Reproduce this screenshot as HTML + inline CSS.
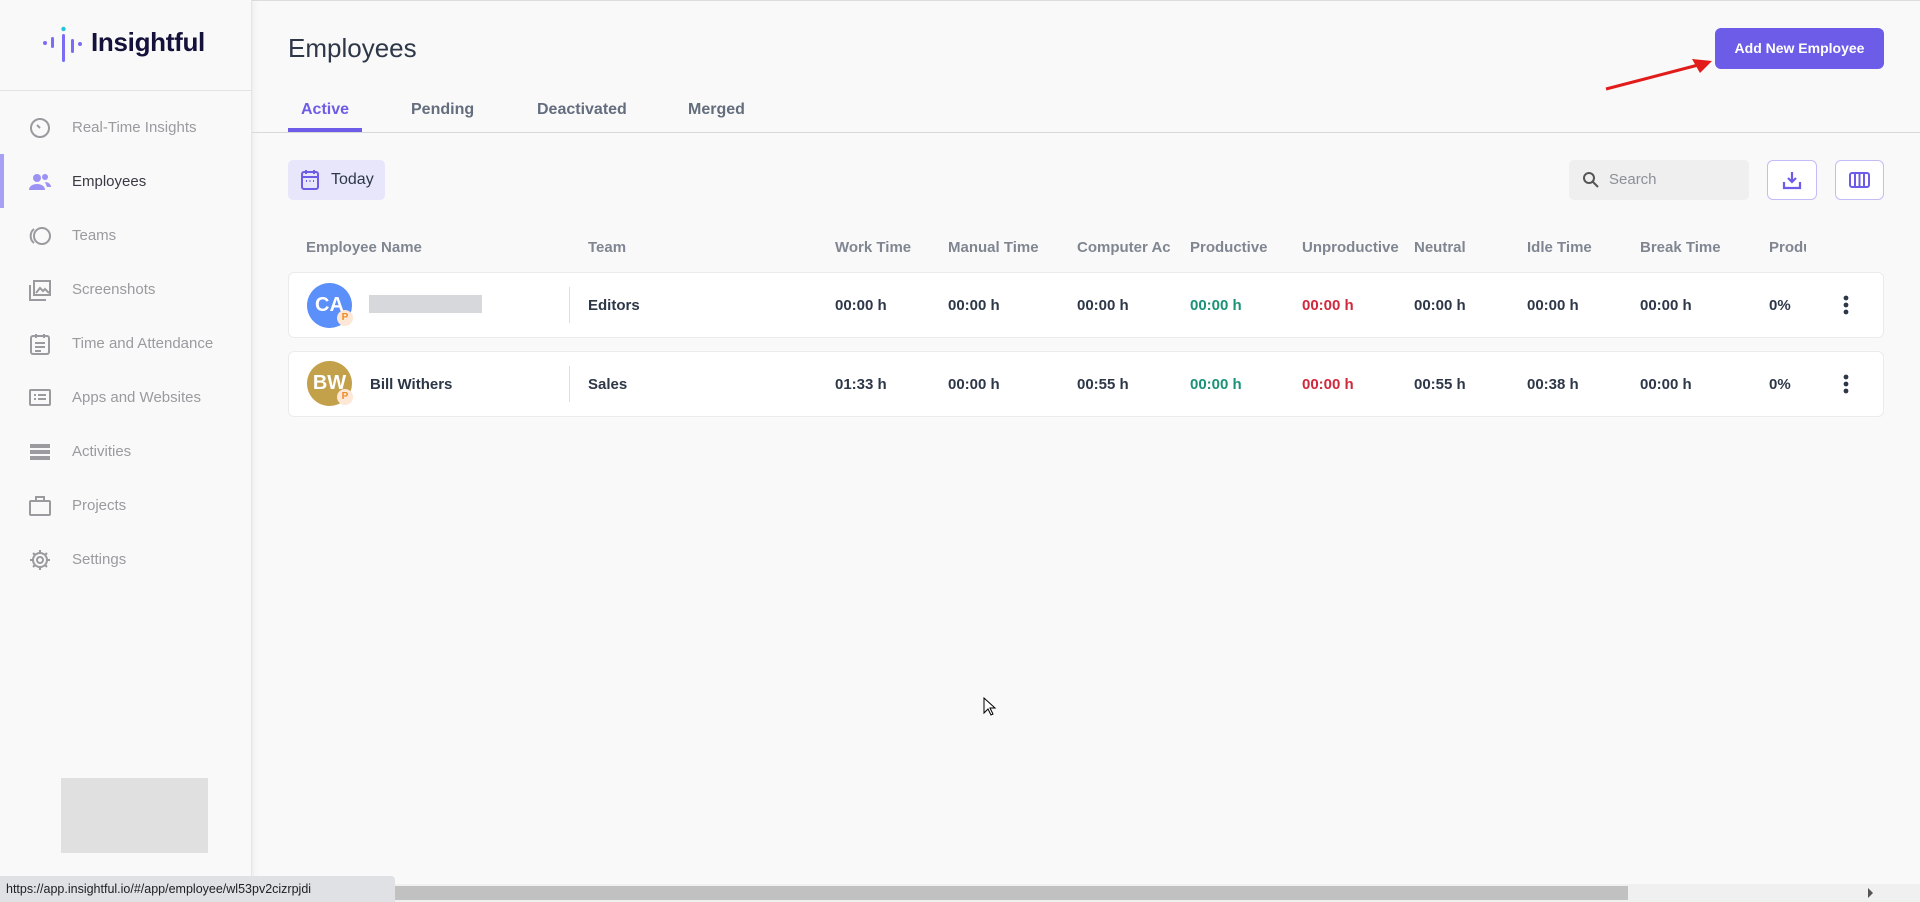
<!DOCTYPE html>
<html><head><meta charset="utf-8"><style>
*{margin:0;padding:0;box-sizing:border-box}
body{width:1920px;height:902px;overflow:hidden;background:#f9f9f9;font-family:"Liberation Sans",sans-serif;position:relative;color:#2d3748}
.abs{position:absolute}
.side{left:0;top:0;width:252px;height:902px;background:#f9f9f9;border-right:1px solid #e5e5e5;box-shadow:2px 0 6px rgba(0,0,0,.05)}
.nav{position:absolute;left:72px;font-size:15px;color:#9a9a9f}
.ico{position:absolute;left:28px;width:24px;height:24px}
.th{position:absolute;top:239px;font-size:15px;color:#6b7280;font-weight:bold;opacity:.85}
.row{position:absolute;left:288px;width:1596px;background:#fff;border:1px solid #ebebeb;border-radius:6px}
.c{position:absolute;font-size:15px;font-weight:bold;color:#2d3748}
</style></head><body>
<div class="abs" style="left:0;top:0;width:1920px;height:1px;background:#ddd"></div>
<div class="abs side"></div>
<svg class="abs" style="left:42px;top:26px" width="44" height="38" viewBox="0 0 44 38">
<circle cx="3" cy="17" r="2" fill="#7b6cf6"/><rect x="9" y="11" width="3" height="11" rx="1.5" fill="#7b6cf6"/>
<circle cx="21.5" cy="3" r="2.2" fill="#22c5d9"/><rect x="20" y="8" width="3" height="28" rx="1.5" fill="#7b6cf6"/>
<rect x="29" y="13" width="3" height="14" rx="1.5" fill="#7b6cf6"/><circle cx="38" cy="18" r="2" fill="#7b6cf6"/></svg>
<div class="abs" style="left:91px;top:27px;font-size:26px;font-weight:bold;color:#14123a;letter-spacing:-0.3px">Insightful</div>
<div class="abs" style="left:0;top:90px;width:252px;height:1px;background:#e3e3e3"></div>
<div class="abs" style="left:0;top:154px;width:4px;height:54px;background:#a8a0f5"></div>
<svg class="ico" style="top:116px" viewBox="0 0 24 24" fill="none" stroke="#9a9a9f" stroke-width="2"><circle cx="12" cy="12" r="9"/><path d="M12 12l-3-3"/></svg><div class="nav" style="top:119px">Real-Time Insights</div>
<svg class="ico" style="top:170px" viewBox="0 0 24 24" fill="#9b92f4"><circle cx="9" cy="8" r="4"/><path d="M1 20c0-4 4-6 8-6s8 2 8 6z"/><circle cx="17" cy="7" r="3"/><path d="M17 12c3 0 6 2 6 5h-4z"/></svg><div class="nav" style="top:173px;color:#3a3a45">Employees</div>
<svg class="ico" style="top:224px" viewBox="0 0 24 24" fill="none" stroke="#9a9a9f" stroke-width="2"><circle cx="14" cy="12" r="8"/><path d="M6 5a9 9 0 0 0 0 14"/></svg><div class="nav" style="top:227px">Teams</div>
<svg class="ico" style="top:278px" viewBox="0 0 24 24" fill="none" stroke="#9a9a9f" stroke-width="2"><rect x="6" y="3" width="16" height="14"/><path d="M2 7v15h16"/><path d="M8 15l4-5 3 3 2-2 4 4" /></svg><div class="nav" style="top:281px">Screenshots</div>
<svg class="ico" style="top:332px" viewBox="0 0 24 24" fill="none" stroke="#9a9a9f" stroke-width="2"><rect x="3" y="4" width="18" height="18" rx="2"/><path d="M8 2v4M16 2v4M7 11h10M7 15h10M7 19h6"/></svg><div class="nav" style="top:335px">Time and Attendance</div>
<svg class="ico" style="top:386px" viewBox="0 0 24 24" fill="none" stroke="#9a9a9f" stroke-width="2"><rect x="2" y="4" width="20" height="15" rx="1"/><path d="M6 9h2M10 9h8M6 13h2M10 13h8"/></svg><div class="nav" style="top:389px">Apps and Websites</div>
<svg class="ico" style="top:440px" viewBox="0 0 24 24" fill="#9a9a9f"><rect x="2" y="4" width="20" height="4"/><rect x="2" y="10" width="20" height="4"/><rect x="2" y="16" width="20" height="4"/></svg><div class="nav" style="top:443px">Activities</div>
<svg class="ico" style="top:494px" viewBox="0 0 24 24" fill="none" stroke="#9a9a9f" stroke-width="2"><rect x="2" y="7" width="20" height="14" rx="1"/><path d="M8 7V3h8v4"/></svg><div class="nav" style="top:497px">Projects</div>
<svg class="ico" style="top:548px" viewBox="0 0 24 24" fill="none" stroke="#9a9a9f" stroke-width="2"><circle cx="12" cy="12" r="3"/><path d="M12 2v3M12 19v3M2 12h3M19 12h3M5 5l2 2M17 17l2 2M5 19l2-2M17 7l2-2"/><circle cx="12" cy="12" r="7"/></svg><div class="nav" style="top:551px">Settings</div>
<div class="abs" style="left:61px;top:778px;width:147px;height:75px;background:#e0e0e1"></div>
<div class="abs" style="left:288px;top:33px;font-size:26px;color:#2d3748">Employees</div>
<div class="abs" style="left:1715px;top:28px;width:169px;height:41px;background:#6c5ce7;border-radius:6px;color:#fff;font-weight:bold;font-size:14px;text-align:center;line-height:41px">Add New Employee</div>
<svg class="abs" style="left:1600px;top:55px" width="120" height="40"><path d="M6 34L102 9" stroke="#e21b1b" stroke-width="3"/><path d="M112 6L92 4L100 18z" fill="#e21b1b"/></svg>
<div class="abs" style="left:301px;top:101px;font-size:16px;font-weight:bold;color:#6c5ce7">Active</div>
<div class="abs" style="left:411px;top:101px;font-size:16px;font-weight:bold;color:#4a5568;opacity:.85">Pending</div>
<div class="abs" style="left:537px;top:101px;font-size:16px;font-weight:bold;color:#4a5568;opacity:.85">Deactivated</div>
<div class="abs" style="left:688px;top:101px;font-size:16px;font-weight:bold;color:#4a5568;opacity:.85">Merged</div>
<div class="abs" style="left:252px;top:132px;width:1668px;height:1px;background:#d8d8d8"></div>
<div class="abs" style="left:288px;top:128px;width:74px;height:4px;background:#6c5ce7"></div>
<div class="abs" style="left:288px;top:160px;width:97px;height:40px;background:#e8e6fb;border-radius:5px"></div>
<svg class="abs" style="left:300px;top:169px" width="20" height="22" viewBox="0 0 20 22" fill="none" stroke="#6c5ce7" stroke-width="2"><rect x="2" y="3" width="16" height="17" rx="2"/><path d="M2 8h16M6 1v4M14 1v4M6 12h1M9.5 12h1M13 12h1"/></svg>
<div class="abs" style="left:331px;top:171px;font-size:16px;color:#2d3748">Today</div>
<div class="abs" style="left:1569px;top:160px;width:180px;height:40px;background:#efefef;border-radius:5px"></div>
<svg class="abs" style="left:1582px;top:171px" width="18" height="18" viewBox="0 0 18 18" fill="none" stroke="#555" stroke-width="2"><circle cx="7" cy="7" r="5"/><path d="M11 11l5 5"/></svg>
<div class="abs" style="left:1609px;top:171px;font-size:15px;color:#8a8f98">Search</div>
<div class="abs" style="left:1767px;top:160px;width:50px;height:40px;border:1px solid #c3bdf7;border-radius:6px;background:#fff"></div>
<svg class="abs" style="left:1782px;top:170px" width="20" height="20" viewBox="0 0 20 20" fill="none" stroke="#6c5ce7" stroke-width="2.2"><path d="M10 2v10M6 8l4 4 4-4M2 12v6h16v-6"/></svg>
<div class="abs" style="left:1835px;top:160px;width:49px;height:40px;border:1px solid #c3bdf7;border-radius:6px;background:#fff"></div>
<svg class="abs" style="left:1849px;top:171px" width="21" height="18" viewBox="0 0 21 18" fill="none" stroke="#6c5ce7" stroke-width="2"><rect x="1" y="2" width="19" height="14" rx="2"/><path d="M6 2v14M10.5 2v14M15 2v14"/></svg>
<div class="th" style="left:306px">Employee Name</div><div class="th" style="left:588px">Team</div><div class="th" style="left:835px">Work Time</div><div class="th" style="left:948px">Manual Time</div><div class="th" style="left:1077px;width:93px;overflow:hidden;white-space:nowrap">Computer Activity</div><div class="th" style="left:1190px">Productive</div><div class="th" style="left:1302px">Unproductive</div><div class="th" style="left:1414px">Neutral</div><div class="th" style="left:1527px">Idle Time</div><div class="th" style="left:1640px">Break Time</div><div class="th" style="left:1769px;width:37px;overflow:hidden;white-space:nowrap">Productivity</div>
<div class="row" style="top:272px;height:66px"></div>
<div class="row" style="top:351px;height:66px"></div>
<div class="abs" style="left:307px;top:283px;width:45px;height:45px;border-radius:50%;background:#5b8ff9;color:#fff;font-size:20px;font-weight:bold;text-align:center;line-height:45px">CA</div>
<div class="abs" style="left:337px;top:310px;width:16px;height:16px;border-radius:50%;background:#fde7d6;color:#f08a24;font-size:10px;font-weight:bold;text-align:center;line-height:16px">P</div>
<div class="abs" style="left:369px;top:295px;width:113px;height:18px;background:#d7d8dc"></div>
<div class="abs" style="left:569px;top:287px;width:1px;height:36px;background:#ddd"></div>
<div class="c" style="left:588px;top:297px">Editors</div>
<div class="c" style="left:835px;top:297px">00:00 h</div><div class="c" style="left:948px;top:297px">00:00 h</div><div class="c" style="left:1077px;top:297px">00:00 h</div><div class="c" style="left:1190px;top:297px;color:#1a9278">00:00 h</div><div class="c" style="left:1302px;top:297px;color:#d0283d">00:00 h</div><div class="c" style="left:1414px;top:297px">00:00 h</div><div class="c" style="left:1527px;top:297px">00:00 h</div><div class="c" style="left:1640px;top:297px">00:00 h</div><div class="c" style="left:1769px;top:297px">0%</div>
<svg class="abs" style="left:1841px;top:295px" width="10" height="22"><circle cx="5" cy="3" r="2.4" fill="#2d3748"/><circle cx="5" cy="10" r="2.4" fill="#2d3748"/><circle cx="5" cy="17" r="2.4" fill="#2d3748"/></svg>
<div class="abs" style="left:307px;top:361px;width:45px;height:45px;border-radius:50%;background:#c3a04a;color:#fff;font-size:20px;font-weight:bold;text-align:center;line-height:45px">BW</div>
<div class="abs" style="left:337px;top:389px;width:16px;height:16px;border-radius:50%;background:#fde7d6;color:#f08a24;font-size:10px;font-weight:bold;text-align:center;line-height:16px">P</div>
<div class="c" style="left:370px;top:376px">Bill Withers</div>
<div class="abs" style="left:569px;top:366px;width:1px;height:36px;background:#ddd"></div>
<div class="c" style="left:588px;top:376px">Sales</div>
<div class="c" style="left:835px;top:376px">01:33 h</div><div class="c" style="left:948px;top:376px">00:00 h</div><div class="c" style="left:1077px;top:376px">00:55 h</div><div class="c" style="left:1190px;top:376px;color:#1a9278">00:00 h</div><div class="c" style="left:1302px;top:376px;color:#d0283d">00:00 h</div><div class="c" style="left:1414px;top:376px">00:55 h</div><div class="c" style="left:1527px;top:376px">00:38 h</div><div class="c" style="left:1640px;top:376px">00:00 h</div><div class="c" style="left:1769px;top:376px">0%</div>
<svg class="abs" style="left:1841px;top:374px" width="10" height="22"><circle cx="5" cy="3" r="2.4" fill="#2d3748"/><circle cx="5" cy="10" r="2.4" fill="#2d3748"/><circle cx="5" cy="17" r="2.4" fill="#2d3748"/></svg>
<svg class="abs" style="left:983px;top:697px" width="14" height="20"><path d="M1 1v15l4-4 3 6 2-1-3-6h5z" fill="#fff" stroke="#000"/></svg>
<div class="abs" style="left:0;top:884px;width:1920px;height:18px;background:#f0f0f0"></div>
<div class="abs" style="left:385px;top:886px;width:1243px;height:14px;background:#c1c1c1"></div>
<div class="abs" style="left:1868px;top:888px;width:0;height:0;border-left:5px solid #555;border-top:5px solid transparent;border-bottom:5px solid transparent"></div>
<div class="abs" style="left:0;top:876px;width:395px;height:26px;background:#dfe1e5;border-top-right-radius:4px;font-size:12.5px;line-height:26px;padding-left:6px;color:#202124">https://app.insightful.io/#/app/employee/wl53pv2cizrpjdi</div>
</body></html>
